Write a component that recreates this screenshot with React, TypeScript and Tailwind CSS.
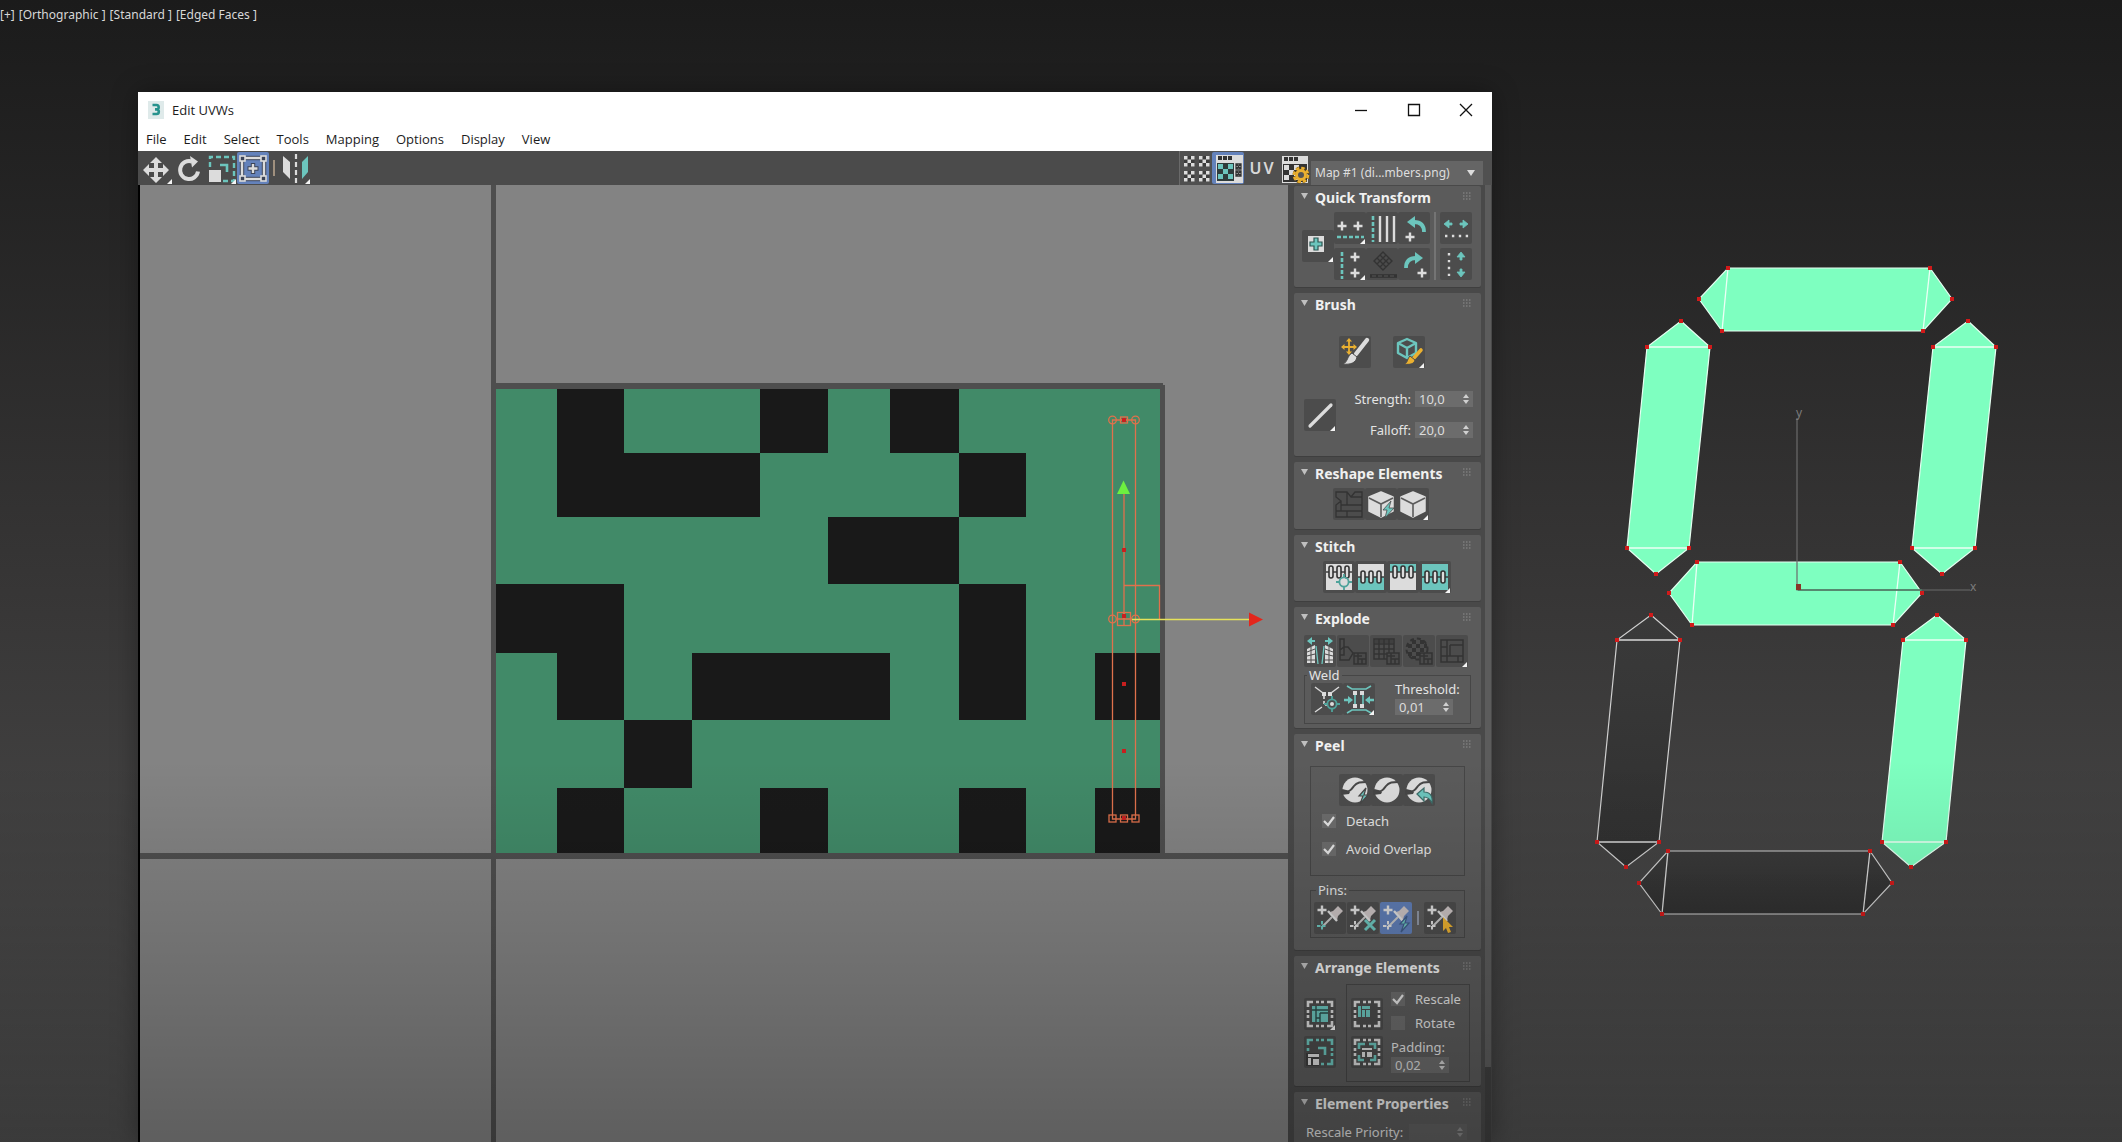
import React from "react";

type Pt = [number, number];
type Kids = { children?: React.ReactNode };

const TEAL = "#6cc5bd";
const LIGHT = "#dcdcdc";
const DIM = "#333333";
const GOLD = "#eab030";

/* ---------- icon primitives ---------- */

function Icon({ children, flyout }: Kids & { flyout?: boolean }) {
  return (
    <svg viewBox="0 0 32 32" className="block size-8 shrink-0" aria-hidden="true">
      {children}
      {flyout && <path d="M26 32h5v-5z" fill="#f4f4f4" />}
    </svg>
  );
}

function Plus({ x, y, c = LIGHT, r = 4.5 }: { x: number; y: number; c?: string; r?: number }) {
  return <path d={`M${x - r} ${y}H${x + r}M${x} ${y - r}V${y + r}`} stroke={c} strokeWidth="2.4" fill="none" />;
}

function Target({ x, y }: { x: number; y: number }) {
  return (
    <g fill="none" stroke="#4fa39b" strokeWidth="1.8">
      <circle cx={x} cy={y} r="4.6" />
      <path d={`M${x - 8} ${y}h4M${x + 4} ${y}h4M${x} ${y - 8}v4M${x} ${y + 4}v4`} />
      <circle cx={x} cy={y} r="2" fill={LIGHT} stroke="none" />
    </g>
  );
}

const bolt = "M27 14l-7 8h4l-3 8 8-9h-4z";

/* ---------- toolbar icons ---------- */

const MoveIcon = () => (
  <Icon flyout>
    <path d="M15 5l6 6h-4v5h5v-4l6 6-6 6v-4h-5v5h4l-6 6-6-6h4v-5H8v4l-6-6 6-6v4h5v-5H9z" fill={LIGHT} />
  </Icon>
);
const RotateIcon = () => (
  <Icon>
    <path d="M19 9.500a9 9 0 1 0 6 10" fill="none" stroke={LIGHT} strokeWidth="4" />
    <path d="M17 4l8 5.500-6 6z" fill={LIGHT} />
  </Icon>
);
const ScaleIcon = () => (
  <Icon flyout>
    <path d="M5 15V5h24v24H18" fill="none" stroke={TEAL} strokeWidth="2.400" strokeDasharray="5 3" />
    <path d="M15 13h7v7" fill="none" stroke={TEAL} strokeWidth="2.600" />
    <rect x="4" y="18" width="12" height="12" fill={LIGHT} />
  </Icon>
);
const FreeformIcon = () => (
  <Icon>
    <rect x="5" y="6" width="22" height="21" fill="none" stroke="#3c4458" strokeWidth="4.400" />
    <rect x="5" y="6" width="22" height="21" fill="none" stroke={LIGHT} strokeWidth="2.400" />
    <g fill="#3c4458" stroke={LIGHT} strokeWidth="1.600">
      <rect x="3" y="4" width="5" height="5" /><rect x="24" y="4" width="5" height="5" />
      <rect x="3" y="24" width="5" height="5" /><rect x="24" y="24" width="5" height="5" />
    </g>
    <path d="M16 11v11M10.500 16.500h11" stroke="#3c4458" strokeWidth="4.400" />
    <Plus x={16} y={16.5} />
  </Icon>
);
const MirrorIcon = () => (
  <Icon flyout>
    <path d="M4 4l7 6v17l-7-7z" fill={LIGHT} />
    <path d="M29 4l-6 6v17l6-7z" fill={TEAL} />
    <path d="M17 2v29" stroke={LIGHT} strokeWidth="2.200" strokeDasharray="5 3" />
  </Icon>
);

function Checker({ x, y, s, c = LIGHT }: { x: number; y: number; s: number; c?: string }) {
  const cells = [[0, 0], [2, 0], [1, 1], [0, 2], [2, 2]];
  return <>{cells.map(([i, j]) => <rect key={`${i}${j}`} x={x + i * s} y={y + j * s} width={s} height={s} fill={c} />)}</>;
}
const CheckerIcon = () => (
  <Icon>
    {[[4, 4], [19, 4], [4, 19], [19, 19]].map(([x, y]) => (
      <g key={`${x}-${y}`}>
        <rect x={x} y={y} width="10.500" height="10.500" fill="#3c3c3c" />
        <Checker x={x} y={y} s={3.5} />
      </g>
    ))}
  </Icon>
);
const ShowMapIcon = () => (
  <Icon>
    <rect x="4" y="3" width="27" height="28" fill={LIGHT} />
    <path d="M6 6h4M11 6h4M16 6h4" stroke="#333" strokeWidth="4" />
    <rect x="5" y="11" width="17" height="18" fill="#2f3b3b" />
    <Checker x={6} y={12} s={5} c={TEAL} />
    <g fill={LIGHT} stroke="#333" strokeWidth="1.300">
      <path d="M24 12h5v5h-5zM24 19h5v5h-5zM24 12l5 5M29 12l-5 5M24 19l5 5M29 19l-5 5" />
    </g>
  </Icon>
);
const MapOptionsIcon = () => (
  <Icon>
    <rect x="3" y="4" width="26" height="27" fill={LIGHT} />
    <path d="M5 7h4M10 7h4M15 7h4" stroke="#333" strokeWidth="4" />
    <rect x="4" y="12" width="24" height="18" fill="#333" />
    <Checker x={5} y={13} s={5} />
    <circle cx="22" cy="23" r="6.500" fill="none" stroke="#5a4312" strokeWidth="4" strokeDasharray="3.400 1.700" />
    <circle cx="22" cy="23" r="7" fill="none" stroke={GOLD} strokeWidth="2.600" strokeDasharray="3.400 2.100" />
    <circle cx="22" cy="23" r="4.500" fill="#555" stroke={GOLD} strokeWidth="3" />
  </Icon>
);

/* ---------- quick transform icons ---------- */

const CenterIcon = () => (
  <Icon flyout>
    <rect x="6" y="6" width="16" height="16" fill={LIGHT} />
    <path d="M12 8h4v4h4v4h-4v4h-4v-4H8v-4h4z" fill={TEAL} stroke="#2d5551" strokeWidth="1.200" />
  </Icon>
);
const AlignHIcon = () => (
  <Icon flyout>
    <Plus x={8} y={14} /><Plus x={24} y={14} />
    <path d="M3 25h27" stroke={TEAL} strokeWidth="2.600" strokeDasharray="4 2" />
  </Icon>
);
const LinesIcon = () => (
  <Icon>
    <path d="M7 4v26" stroke={TEAL} strokeWidth="2.600" strokeDasharray="4 2" />
    <path d="M14 4v26M21 4v26M28 4v26" stroke={LIGHT} strokeWidth="2.400" />
  </Icon>
);
const Rot90LIcon = () => (
  <Icon>
    <path d="M26 20c0-7-4-10-10-10" fill="none" stroke={TEAL} strokeWidth="3.800" />
    <path d="M17 4v12l-8-6z" fill={TEAL} />
    <Plus x={12} y={25} />
  </Icon>
);
const AlignVIcon = () => (
  <Icon flyout>
    <path d="M8 4v27" stroke={TEAL} strokeWidth="2.600" strokeDasharray="4 2" />
    <Plus x={21} y={9} /><Plus x={21} y={25} />
  </Icon>
);
const SpacingIcon = () => (
  <Icon>
    <path d="M17 4l9 9-9 9-9-9zM14 7l9 9M11 10l9 9M20 7l-9 9M23 10l-9 9" fill="none" stroke={DIM} strokeWidth="1.400" />
    <path d="M4 28h27" stroke={DIM} strokeWidth="3.600" />
    <path d="M6 28h24" stroke="#565656" strokeWidth="1" strokeDasharray="4 2" />
  </Icon>
);
const Rot90RIcon = () => (
  <Icon>
    <path d="M8 20c0-7 4-10 10-10" fill="none" stroke={TEAL} strokeWidth="3.800" />
    <path d="M17 4v12l8-6z" fill={TEAL} />
    <Plus x={24} y={25} />
  </Icon>
);
const SpreadHIcon = () => (
  <Icon>
    <path d="M4 12l5-4v3h3v2H9v3zM28 12l-5-4v3h-3v2h3v3z" fill={TEAL} stroke={TEAL} strokeWidth="0.800" />
    <path d="M5 24h24" stroke={LIGHT} strokeWidth="2.400" strokeDasharray="2.400 4.500" />
  </Icon>
);
const SpreadVIcon = () => (
  <Icon>
    <path d="M21 4l-4 5h3v3h2V9h3zM21 29l-4-5h3v-3h2v3h3z" fill={TEAL} stroke={TEAL} strokeWidth="0.800" />
    <path d="M9 5v24" stroke={LIGHT} strokeWidth="2.400" strokeDasharray="2.400 4.500" />
  </Icon>
);

/* ---------- brush icons ---------- */

const PaintMoveIcon = () => (
  <Icon>
    <path d="M10 4v14M3 11h14" stroke={GOLD} strokeWidth="1.800" />
    <path d="M10 2l3 3.500H7zM10 19l3-3.500H7zM2 11l3.500-3v6zM18 11l-3.500-3v6z" fill={GOLD} />
    <path d="M28 4L17 18" stroke={LIGHT} strokeWidth="4.400" strokeLinecap="round" />
    <path d="M13 17l5 4c-1 6-7 8-14 7 5-2 4-8 9-11z" fill={LIGHT} stroke="#4c4c4c" />
  </Icon>
);
const RelaxIcon = () => (
  <Icon flyout>
    <path d="M14 3l9 4v10l-9 5-9-5V7zM5 7l9 5 9-5M14 12v9" fill="none" stroke={TEAL} strokeWidth="2.400" strokeLinejoin="round" />
    <path d="M28 14l-8 9" stroke={GOLD} strokeWidth="3.600" strokeLinecap="round" />
    <path d="M17 20l5 4c-1 4-5 5-11 4 4-1 3-5 6-8z" fill={GOLD} stroke="#4c4c4c" />
  </Icon>
);
const FalloffIcon = () => (
  <Icon flyout>
    <path d="M6 27L27 6" stroke={LIGHT} strokeWidth="3.200" strokeLinecap="round" />
  </Icon>
);

/* ---------- reshape icons ---------- */

const StraightenIcon = () => (
  <Icon>
    <path d="M3 4h11l4 5 4-5h7v25H3V17l5-4-5-4zM8 13v10H3M8 17h21M14 4v13M8 23h21M14 23v6M18 9h11" fill="none" stroke={DIM} strokeWidth="1.300" />
  </Icon>
);
const Cube = () => (
  <g>
    <path d="M16 4l12 5v14l-12 6-12-6V9z" fill={LIGHT} stroke={LIGHT} strokeLinejoin="round" strokeWidth="1.500" />
    <path d="M4 10l12 6 12-6M16 16v13" fill="none" stroke="#5c5c5c" strokeWidth="1.600" />
  </g>
);
const RelaxCustomIcon = () => (
  <Icon>
    <Cube />
    <path d="M26 13l-8 9h4l-2 8 9-10h-5z" fill={TEAL} stroke="#4c4c4c" strokeWidth="0.800" />
  </Icon>
);
const RelaxCubeIcon = () => <Icon flyout><Cube /></Icon>;

/* ---------- stitch icons ---------- */

function Stitch({ top, bottom, y, flyout, target }: { top: string; bottom: string; y: number; flyout?: boolean; target?: boolean }) {
  return (
    <Icon flyout={flyout}>
      <rect x="3" y="3" width="26" height={y - 3} fill={top} />
      <rect x="3" y={y} width="26" height={29 - y} fill={bottom} />
      <path d={`M3 ${y}H29`} stroke="#333" strokeWidth="1.400" />
      {[8, 16, 24].map((x) => (
        <rect key={x} x={x - 2} y={y - 6} width="4" height="12" rx="2" fill={LIGHT} stroke="#333" strokeWidth="1.600" />
      ))}
      {target && <Target x={21} y={21} />}
    </Icon>
  );
}

/* ---------- explode icons ---------- */

const BreakIcon = () => (
  <Icon>
    <path d="M3 6l5-4v3h3v2H8v3zM29 6l-5-4v3h-3v2h3v3z" fill={TEAL} />
    <path d="M3 14l8-4v18H3zM29 14l-8-4v18h8z" fill={LIGHT} />
    <path d="M3 17l8-3M3 21l8-2M3 25h8M29 17l-8-3M29 21l-8-2M29 25h-8M7 12v16M25 12v16" stroke="#4c4c4c" />
    <path d="M12 11l2 18M20 11l-2 18" stroke={TEAL} strokeWidth="1.300" />
  </Icon>
);
const MiniFrame = () => (
  <g fill="#4a4a4a" stroke={DIM} strokeWidth="1.500">
    <rect x="17" y="18" width="12" height="11" />
    <path d="M17 21h8M21 18v11M21 24h8M25 24v5" />
  </g>
);
const FlattenAIcon = () => (
  <Icon><path d="M3 4h4v16h-4zM3 15l4-3h4l5 6-4 7H3z" fill="none" stroke={DIM} strokeWidth="1.500" /><MiniFrame /></Icon>
);
const FlattenGridIcon = () => (
  <Icon>
    <path d="M4 4h20v20H4zM4 9h20M4 14h20M4 19h20M9 4v20M14 4v20M19 4v20" fill="none" stroke={DIM} strokeWidth="1.500" />
    <path d="M5 5h18v3H5z" fill={DIM} opacity="0.500" /><MiniFrame />
  </Icon>
);
const FlattenBallIcon = () => (
  <Icon>
    <circle cx="14" cy="14" r="10.500" fill="none" stroke={DIM} strokeWidth="2" strokeDasharray="4 3" />
    <path d="M9 5h4v4H9zM17 5h4v4h-4zM5 9h4v4H5zM13 9h4v4h-4zM21 9h3v4h-3zM9 13h4v4H9zM17 13h4v4h-4zM5 17h4v4H5zM13 17h4v4h-4zM9 21h4v3H9z" fill={DIM} />
    <MiniFrame />
  </Icon>
);
const FlattenFrameIcon = () => (
  <Icon flyout>
    <path d="M5 5h22v22H5zM11 5v22M5 12h6M11 21h16M14 10h13M14 10v11M22 21v6M5 21h6" fill="none" stroke={DIM} strokeWidth="1.500" />
  </Icon>
);
const WeldTargetIcon = () => (
  <Icon>
    <path d="M4 4l8 6M28 4l-8 6M4 29l7-5" stroke={LIGHT} strokeWidth="1.400" />
    <path d="M11 9h4v4h-4zM17 9h4v4h-4z" fill={LIGHT} />
    <path d="M13 13v9h4" fill="none" stroke={LIGHT} strokeWidth="1.600" strokeDasharray="3 2" />
    <Target x={21} y={21} />
  </Icon>
);
const WeldIcon = () => (
  <Icon flyout>
    <path d="M4 3l5 3h14l5-3M4 30l5-3h14l5 3" fill="none" stroke={TEAL} strokeWidth="1.600" />
    <path d="M12 12v10M20 12v10" stroke={TEAL} strokeWidth="1.600" />
    <path d="M1 17h5M31 17h-5" stroke={TEAL} strokeWidth="2.400" />
    <path d="M10 17l-5-4v8zM22 17l5-4v8z" fill={TEAL} />
    <path d="M10 8h4v4h-4zM17 8h4v4h-4zM10 21h4v4h-4zM17 21h4v4h-4z" fill={LIGHT} />
  </Icon>
);

/* ---------- peel icons ---------- */

const Ball = () => (
  <g>
    <circle cx="16" cy="16" r="12.500" fill={LIGHT} />
    <path d="M3 16c8 3 9 0 12-4s7-4 12-4" fill="none" stroke="#474747" strokeWidth="2" />
    <path d="M2 16l9 2-1 2-8 1z" fill="#474747" />
  </g>
);
const QuickPeelIcon = () => <Icon><Ball /><path d={bolt} fill={TEAL} stroke="#474747" strokeWidth="1.200" /></Icon>;
const PeelIcon = () => <Icon><Ball /></Icon>;
const ResetPeelIcon = () => (
  <Icon>
    <Ball />
    <path d="M14 20l7-6v4c6 0 9 4 8 11-2-4-4-6-8-6v4z" fill={TEAL} stroke="#3d6d69" strokeWidth="1.200" />
  </Icon>
);

function Pin({ children, flag = LIGHT }: Kids & { flag?: string }) {
  return (
    <Icon>
      <Plus x={8} y={8} />
      <path d="M8 25L18 15" stroke="#c4c4c4" strokeWidth="2" />
      <path d="M16 10l3-1 5-5 5 5-5 5-1 4z" fill="#c9c1c1" />
      <path d="M14 9l9 10" stroke={LIGHT} strokeWidth="2.400" />
      <path d="M3 24h10M8 19v10" stroke={flag} strokeWidth="2" strokeDasharray="3.500 1.500" />
      {children}
    </Icon>
  );
}

/* ---------- arrange icons ---------- */

function Dashed({ c = LIGHT }: { c?: string }) {
  return <path d="M4 9V4h5M23 4h5v5M28 23v5h-5M9 28H4v-5M12 4h3M17 4h3M12 28h3M17 28h3M4 12v3M4 17v3M28 12v3M28 17v3" fill="none" stroke={c} strokeWidth="2.600" />;
}
const PackIcon = () => (
  <Icon flyout>
    <Dashed />
    <rect x="8" y="8" width="16" height="16" fill={TEAL} />
    <path d="M8 12h16M12 8v16M12 20h4M16 15h8M16 15v9" stroke="#2b4c4a" strokeWidth="1.400" fill="none" />
  </Icon>
);
const RescaleIcon = () => (
  <Icon>
    <Dashed c={TEAL} />
    <path d="M14 12h7v7" fill="none" stroke={TEAL} strokeWidth="2.600" />
    <rect x="2" y="17" width="13" height="13" fill="#3c3c3c" />
    <path d="M4 18h11v3H4zM4 22h3v7H4zM9 23h6v6H9z" fill={LIGHT} />
  </Icon>
);
const PackTogetherIcon = () => (
  <Icon>
    <Dashed />
    <path d="M7 8h3v11H7zM11 8h8v3h-8zM11 12h3v7h-3zM15 12h4v7h-4z" fill={TEAL} />
  </Icon>
);
const PackNormalizeIcon = () => (
  <Icon>
    <Dashed />
    <path d="M8 13V8h6M18 8h6v5M24 19v5h-5M13 24H8v-5" fill="none" stroke={TEAL} strokeWidth="2.600" />
    <path d="M11 12h10v2H11zM11 16h3v5h-3zM16 16h5v5h-5z" fill={LIGHT} />
  </Icon>
);

/* ---------- shared controls ---------- */

function Tool({ label, active, children }: Kids & { label: string; active?: boolean }) {
  return (
    <button type="button" aria-label={label} className={active ? "rounded-xs bg-[#5f7db5]" : "rounded-xs bg-[#4c4c4c]"}>
      {children}
    </button>
  );
}

function BarTool({ label, active, children }: Kids & { label: string; active?: boolean }) {
  return (
    <button type="button" aria-label={label} className={active ? "size-8 rounded-xs bg-[#6482bb]" : "size-8"}>
      {children}
    </button>
  );
}

function Rollout({ title, children, id }: Kids & { title: string; id: string }) {
  return (
    <section aria-labelledby={id} className="rounded-xs bg-[#5b5b5b] shadow-[0_1px_0_#3f3f3f]">
      <header className="flex h-6 items-center pr-2.5 pl-[7px]">
        <svg viewBox="0 0 8 8" className="mb-1 size-2" aria-hidden="true"><path d="M0 1h7L3.500 7z" fill="#c0c0c0" /></svg>
        <h2 id={id} className="ml-1.5 flex-1 text-sm leading-6 font-bold text-[#f0f0f0]">{title}</h2>
        <svg viewBox="0 0 8 8" className="mb-1 size-2" aria-hidden="true">
          <path d="M0 1h8M0 4h8M0 7h8" stroke="#8d8d8d" strokeWidth="1.200" strokeDasharray="1.500 1.500" />
        </svg>
      </header>
      {children}
    </section>
  );
}

function Spinner({ id, value }: { id: string; value: string }) {
  return (
    <span className="flex h-4 w-[58px] items-center bg-[#6c6c6c] pr-1">
      <input id={id} defaultValue={value} className="h-4 w-full min-w-0 bg-transparent pl-1 text-[13px] leading-4 text-[#dcdcdc] outline-none" />
      <svg viewBox="0 0 6 12" className="h-3 w-1.5 shrink-0" aria-hidden="true"><path d="M0 5l3-4 3 4zM0 7l3 4 3-4z" fill="#d0d0d0" /></svg>
    </span>
  );
}

function Check({ id, label, on }: { id: string; label: string; on?: boolean }) {
  return (
    <div className="flex items-center gap-2.5">
      <span className="relative size-3.5">
        <input id={id} type="checkbox" defaultChecked={on} className="peer block size-3.5 appearance-none bg-[#6c6c6c]" />
        <svg viewBox="0 0 14 14" className="pointer-events-none absolute inset-0 hidden size-3.5 peer-checked:block" aria-hidden="true">
          <path d="M2 7l4 4 6-8" fill="none" stroke="#e4e4e4" strokeWidth="2.200" />
        </svg>
      </span>
      <label htmlFor={id} className="leading-4">{label}</label>
    </div>
  );
}

/* ---------- UV canvas ---------- */

const COLS = [496, 557, 624, 692, 760, 828, 890, 959, 1026, 1095, 1160];
const ROWS = [389, 453, 517, 584, 653, 720, 788, 853];
const FILLED = [[1, 4, 6], [1, 2, 3, 7], [5, 6], [0, 1, 7], [1, 3, 4, 5, 7, 9], [2], [1, 4, 7, 9]];

function UvCanvas() {
  return (
    <div className="relative min-w-0 flex-1 overflow-hidden border-l-2 border-black bg-[#838383]">
      <svg viewBox="140 185 1148 957" width="1148" height="957" className="absolute top-0 left-0 max-w-none" role="img" aria-label="UV layout">
        <g fill="#4e4e4e">
          <rect x="491" y="185" width="5" height="957" />
          <rect x="140" y="853" width="1148" height="6" />
          <rect x="491" y="383" width="672" height="6" />
          <rect x="1160" y="385" width="5" height="470" />
        </g>
        <rect x="496" y="389" width="664" height="464" fill="#418a68" />
        <g fill="#191919" shapeRendering="crispEdges">
          {FILLED.map((cells, r) => cells.map((c) => (
            <rect key={`${r}-${c}`} x={COLS[c]} y={ROWS[r]} width={COLS[c + 1] - COLS[c]} height={ROWS[r + 1] - ROWS[r]} />
          )))}
        </g>
        <g fill="none" stroke="#e0714c" strokeWidth="1.300">
          <path d="M1112.500 420V819H1135.500V420zM1124 494V619M1124 585.500h35.500V619" />
          {[1112.5, 1135.5].map((x) => (
            <g key={x}>
              <circle cx={x} cy="420" r="3.800" /><circle cx={x} cy="619" r="3.800" />
              <rect x={x - 3.5} y="815" width="7" height="7" />
            </g>
          ))}
          <rect x="1120.500" y="417" width="7" height="6" />
          <rect x="1120.500" y="815" width="7" height="7" />
          <rect x="1117.500" y="612.500" width="13" height="13" />
          <path d="M1117 619h14M1124 612v13" />
        </g>
        <g fill="#c81f1f">
          {[420, 550, 616, 684, 751, 818].map((y) => <rect key={y} x="1122" y={y - 2} width="4" height="4" />)}
        </g>
        <path d="M1132 619.500H1250" stroke="#e6e25a" strokeWidth="1.600" />
        <path d="M1249 612.500v14l14-7z" fill="#e3261c" />
        <path d="M1123.500 480.500l6.500 13.500h-13z" fill="#6df040" />
      </svg>
    </div>
  );
}

/* ---------- 3D viewport ---------- */

const H_SEGS: { p: Pt[]; on: boolean }[] = [
  { on: true, p: [[1728, 268], [1930, 268], [1952, 299], [1923, 331], [1722, 331], [1699, 299]] },
  { on: true, p: [[1697, 562], [1900, 562], [1922, 593], [1893, 625], [1692, 625], [1669, 593]] },
  { on: false, p: [[1668, 851], [1870, 851], [1892, 883], [1863, 914], [1662, 914], [1639, 883]] },
];
const V_SEGS: { p: Pt[]; on: boolean }[] = [
  { on: true, p: [[1681, 321], [1710, 347], [1689, 548], [1656, 574], [1627, 548], [1647, 347]] },
  { on: true, p: [[1968, 321], [1996, 347], [1975, 548], [1942, 574], [1912, 548], [1933, 347]] },
  { on: false, p: [[1651, 615], [1680, 640], [1659, 842], [1626, 867], [1597, 842], [1617, 640]] },
  { on: true, p: [[1937, 615], [1966, 640], [1946, 842], [1911, 867], [1882, 842], [1903, 640]] },
];

function Segment({ p, on, cuts }: { p: Pt[]; on: boolean; cuts: [number, number][] }) {
  return (
    <g>
      <polygon points={p.join(" ")} fill={on ? "#7effc0" : "url(#off)"} stroke={on ? "#e6fff2" : "#d0d0d0"} strokeWidth="1.200" />
      {cuts.map(([a, b]) => (
        <path key={a} d={`M${p[a]}L${p[b]}`} stroke={on ? "#ecfff5" : "#d8d8d8"} strokeWidth="1.300" />
      ))}
      {p.map(([x, y]) => <rect key={`${x}-${y}`} x={x - 2} y={y - 2} width="4" height="4" fill="#d11a1a" />)}
    </g>
  );
}

function Display() {
  return (
    <svg viewBox="1570 240 450 700" width="450" height="700" className="absolute top-[240px] left-[1570px]" role="img" aria-label="Seven segment mesh">
      <defs>
        <linearGradient id="off" x1="0" y1="0" x2="0" y2="1">
          <stop offset="0" stopColor="#3a3a3a" /><stop offset="1" stopColor="#303030" />
        </linearGradient>
      </defs>
      {H_SEGS.map((s, i) => <Segment key={i} {...s} cuts={[[0, 4], [1, 3]]} />)}
      {V_SEGS.map((s, i) => <Segment key={i} {...s} cuts={[[5, 1], [4, 2]]} />)}
      <path d="M1797 418V590H1970" fill="none" stroke="#6b6b6b" strokeWidth="1.200" />
      <path d="M1798 590H1922" stroke="#4d7a63" strokeWidth="1.400" />
      <rect x="1796" y="584" width="5" height="6" fill="#8a3528" />
      <g fill="#7c7c7c" fontFamily="Noto Sans, sans-serif" fontSize="12">
        <text x="1796" y="417">y</text>
        <text x="1970" y="591">x</text>
      </g>
    </svg>
  );
}

const MENUS = ["File", "Edit", "Select", "Tools", "Mapping", "Options", "Display", "View"];
const VIEW_LABELS = ["[+]", "[Orthographic ]", "[Standard ]", "[Edged Faces ]"];

export default function App() {
  return (
    <main className="relative h-screen overflow-hidden bg-linear-to-b from-[#1b1b1b] via-[#363535] to-[#515151] font-[Noto_Sans,sans-serif] text-[13px] text-[#e4e4e4]">
      <nav aria-label="Viewport" className="flex gap-1 pt-[5px] text-xs leading-5 text-[#d8d8d8]">
        {VIEW_LABELS.map((t) => <button key={t} type="button">{t}</button>)}
      </nav>
      <Display />

      <div className="absolute top-[92px] bottom-0 left-[138px] flex w-[1354px] flex-col shadow-[0_0_24px_rgba(0,0,0,0.35)]">
        <header className="flex h-[59px] shrink-0 flex-col bg-white text-[#1c1c1c]">
          <div className="flex h-[35px] items-center pl-2.5">
            <svg viewBox="0 0 16 18" className="h-[18px] w-4" aria-hidden="true">
              <rect width="16" height="18" fill="#dfeaea" />
              <path d="M4.500 4h4a2.200 2.200 0 0 1 0 4.400H7h1.500a2.300 2.300 0 0 1 0 4.600h-4" fill="none" stroke="#27928d" strokeWidth="2.600" />
            </svg>
            <h1 className="ml-2 flex-1 font-[Open_Sans,sans-serif] text-[13px] leading-6">Edit UVWs</h1>
            <div className="flex pr-2.5">
              {[
                ["Minimize", "M2 7.500h12"],
                ["Maximize", "M2.500 1.500h11v11h-11z"],
                ["Close", "M2 1l12 12M14 1L2 13"],
              ].map(([name, d]) => (
                <button key={name} type="button" aria-label={name} className="flex h-8 w-[53px] items-center justify-center last:w-8 last:ml-2.5">
                  <svg viewBox="0 0 16 14" className="h-3.5 w-4" aria-hidden="true"><path d={d} fill="none" stroke="#111" strokeWidth="1.300" /></svg>
                </button>
              ))}
            </div>
          </div>
          <nav aria-label="Main menu" className="flex gap-[17px] pl-2 font-[Open_Sans,sans-serif] text-[13px] leading-6">
            {MENUS.map((m) => <button key={m} type="button">{m}</button>)}
          </nav>
        </header>

        <div className="flex h-[34px] shrink-0 items-center bg-[#4b4b4b]">
          <div className="flex flex-1 items-center pl-[3px]">
            <BarTool label="Move"><MoveIcon /></BarTool>
            <BarTool label="Rotate"><RotateIcon /></BarTool>
            <BarTool label="Scale"><ScaleIcon /></BarTool>
            <BarTool label="Freeform" active><FreeformIcon /></BarTool>
            <span className="mx-1 h-4 w-0.5 bg-[#a0907e]" />
            <BarTool label="Mirror"><MirrorIcon /></BarTool>
          </div>
          <div className="flex h-full items-center border-l border-[#6a6a6a] bg-[#505050] pr-[9px]">
            <BarTool label="Checker pattern"><CheckerIcon /></BarTool>
            <BarTool label="Show map" active><ShowMapIcon /></BarTool>
            <button type="button" className="flex h-8 w-[35px] items-center justify-center gap-0.5 text-base font-semibold text-[#d8d8d8]"><span>U</span><span>V</span></button>
            <BarTool label="Map options"><MapOptionsIcon /></BarTool>
            <div className="relative mt-2.5 w-[172px]">
              <select aria-label="Map" className="block h-6 w-full appearance-none rounded-none bg-[#656565] pl-1 text-xs text-[#dedede]">
                <option>Map #1 (di...mbers.png)</option>
              </select>
              <svg viewBox="0 0 8 8" className="pointer-events-none absolute top-2 right-2 size-2" aria-hidden="true"><path d="M0 1h8L4 7z" fill="#dcdcdc" /></svg>
            </div>
          </div>
        </div>

        <div className="flex min-h-0 flex-1">
          <UvCanvas />
          <aside aria-label="Tools" className="flex w-[204px] shrink-0 overflow-hidden bg-[#494949]">
            <div className="ml-1.5 flex w-[187px] shrink-0 flex-col gap-1.5 pt-px">
              <Rollout id="qt" title="Quick Transform">
                <div className="flex items-center pt-0.5 pr-2 pb-[7px] pl-2">
                  <Tool label="Align to pivot"><CenterIcon /></Tool>
                  <div className="grid grid-cols-3 gap-y-1">
                    <Tool label="Align horizontally"><AlignHIcon /></Tool>
                    <Tool label="Linear align"><LinesIcon /></Tool>
                    <Tool label="Rotate -90"><Rot90LIcon /></Tool>
                    <Tool label="Align vertically"><AlignVIcon /></Tool>
                    <Tool label="Spacing"><SpacingIcon /></Tool>
                    <Tool label="Rotate 90"><Rot90RIcon /></Tool>
                  </div>
                  <span className="mx-1 h-[68px] w-0.5 bg-[#747474]" />
                  <div className="flex flex-col gap-1">
                    <Tool label="Space horizontally"><SpreadHIcon /></Tool>
                    <Tool label="Space vertically"><SpreadVIcon /></Tool>
                  </div>
                </div>
              </Rollout>

              <Rollout id="brush" title="Brush">
                <div className="flex justify-center gap-[22px] pt-[19px] pr-3">
                  <Tool label="Paint move"><PaintMoveIcon /></Tool>
                  <Tool label="Relax brush"><RelaxIcon /></Tool>
                </div>
                <div className="flex items-center justify-between pt-[23px] pr-2 pb-[18px] pl-2.5">
                  <Tool label="Falloff type"><FalloffIcon /></Tool>
                  <div className="grid grid-cols-[auto_auto] items-center justify-items-end gap-x-1 gap-y-[15px]">
                    <label htmlFor="strength" className="leading-4">Strength:</label><Spinner id="strength" value="10,0" />
                    <label htmlFor="falloff" className="leading-4">Falloff:</label><Spinner id="falloff" value="20,0" />
                  </div>
                </div>
              </Rollout>

              <Rollout id="reshape" title="Reshape Elements">
                <div className="flex justify-center pt-0.5 pr-3.5 pb-[9px]">
                  <Tool label="Straighten"><StraightenIcon /></Tool>
                  <Tool label="Relax until flat"><RelaxCustomIcon /></Tool>
                  <Tool label="Relax"><RelaxCubeIcon /></Tool>
                </div>
              </Rollout>

              <Rollout id="stitch" title="Stitch">
                <div className="flex justify-center pt-0.5 pr-0.5 pb-2">
                  <Tool label="Stitch custom"><Stitch top={LIGHT} bottom={LIGHT} y={11} target /></Tool>
                  <Tool label="Stitch to target"><Stitch top={LIGHT} bottom={TEAL} y={16} /></Tool>
                  <Tool label="Stitch to average"><Stitch top={TEAL} bottom={LIGHT} y={11} /></Tool>
                  <Tool label="Stitch to source"><Stitch top={TEAL} bottom={TEAL} y={16} flyout /></Tool>
                </div>
              </Rollout>

              <Rollout id="explode" title="Explode">
                <div className="flex gap-px pt-1 pl-2.5">
                  <Tool label="Break"><BreakIcon /></Tool>
                  <Tool label="Flatten by angle"><FlattenAIcon /></Tool>
                  <Tool label="Flatten by smoothing group"><FlattenGridIcon /></Tool>
                  <Tool label="Flatten by material"><FlattenBallIcon /></Tool>
                  <Tool label="Flatten custom"><FlattenFrameIcon /></Tool>
                </div>
                <div className="px-2.5 pb-1">
                  <fieldset className="flex h-[57px] items-start border border-[#464646] pl-1.5">
                    <legend className="-ml-1 px-0.5 leading-4">Weld</legend>
                    <div className="flex">
                      <Tool label="Target weld"><WeldTargetIcon /></Tool>
                      <Tool label="Weld selected"><WeldIcon /></Tool>
                    </div>
                    <div className="ml-5 flex flex-col gap-1">
                      <label htmlFor="threshold" className="leading-3">Threshold:</label><Spinner id="threshold" value="0,01" />
                    </div>
                  </fieldset>
                </div>
              </Rollout>

              <Rollout id="peel" title="Peel">
                <div className="px-4 pt-2 pb-3">
                  <div className="flex h-[110px] flex-col border border-[#464646] pt-[7px] pl-[11px]">
                    <div className="flex justify-center pr-3">
                      <Tool label="Quick peel"><QuickPeelIcon /></Tool>
                      <Tool label="Peel mode"><PeelIcon /></Tool>
                      <Tool label="Reset peel"><ResetPeelIcon /></Tool>
                    </div>
                    <div className="mt-[7px] flex flex-col gap-3">
                      <Check id="detach" label="Detach" on />
                      <Check id="overlap" label="Avoid Overlap" on />
                    </div>
                  </div>
                  <fieldset className="mt-1.5 flex h-14 items-center gap-px border border-[#464646] pl-[3px]">
                    <legend className="ml-0.5 px-0.5 leading-4">Pins:</legend>
                    <Tool label="Pin"><Pin flag={TEAL} /></Tool>
                    <Tool label="Unpin"><Pin><path d="M18 18l10 10M28 18L18 28" stroke={TEAL} strokeWidth="3" /></Pin></Tool>
                    <Tool label="Auto pin" active><Pin><path d={bolt} fill={TEAL} stroke="#3f5a86" strokeWidth="1.200" /></Pin></Tool>
                    <span className="mx-1 h-3.5 w-0.5 bg-[#8c93a0]" />
                    <Tool label="Select pinned"><Pin><path d="M19 15v14l3-3 2 5 3-1-2-5h4z" fill={GOLD} /></Pin></Tool>
                  </fieldset>
                </div>
              </Rollout>

              <Rollout id="arrange" title="Arrange Elements">
                <div className="flex items-center gap-2.5 pt-1 pb-1 pl-2.5">
                  <div className="flex flex-col gap-1.5">
                    <Tool label="Pack"><PackIcon /></Tool>
                    <Tool label="Rescale elements"><RescaleIcon /></Tool>
                  </div>
                  <div className="flex h-[98px] w-[124px] items-center gap-2 border border-[#464646] pl-1">
                    <div className="flex flex-col gap-1.5">
                      <Tool label="Pack together"><PackTogetherIcon /></Tool>
                      <Tool label="Pack normalize"><PackNormalizeIcon /></Tool>
                    </div>
                    <div className="flex flex-col gap-2 pb-0.5">
                      <Check id="rescale" label="Rescale" on />
                      <Check id="rotate" label="Rotate" />
                      <div className="flex flex-col gap-0.5">
                        <label htmlFor="padding" className="leading-4">Padding:</label><Spinner id="padding" value="0,02" />
                      </div>
                    </div>
                  </div>
                </div>
              </Rollout>

              <Rollout id="props" title="Element Properties">
                <div className="flex h-8 items-center gap-1.5 pl-3">
                  <label htmlFor="priority" className="leading-4">Rescale Priority:</label>
                  <span className="opacity-40"><Spinner id="priority" value="" /></span>
                </div>
              </Rollout>
            </div>
            <div className="ml-1 h-full w-1.5 bg-[#404040]"><div className="h-[882px] bg-[#5c5c5c]" /></div>
          </aside>
        </div>
      </div>

      <div className="pointer-events-none absolute inset-x-0 top-[760px] bottom-0 bg-linear-to-b from-transparent to-black/28" />
    </main>
  );
}
